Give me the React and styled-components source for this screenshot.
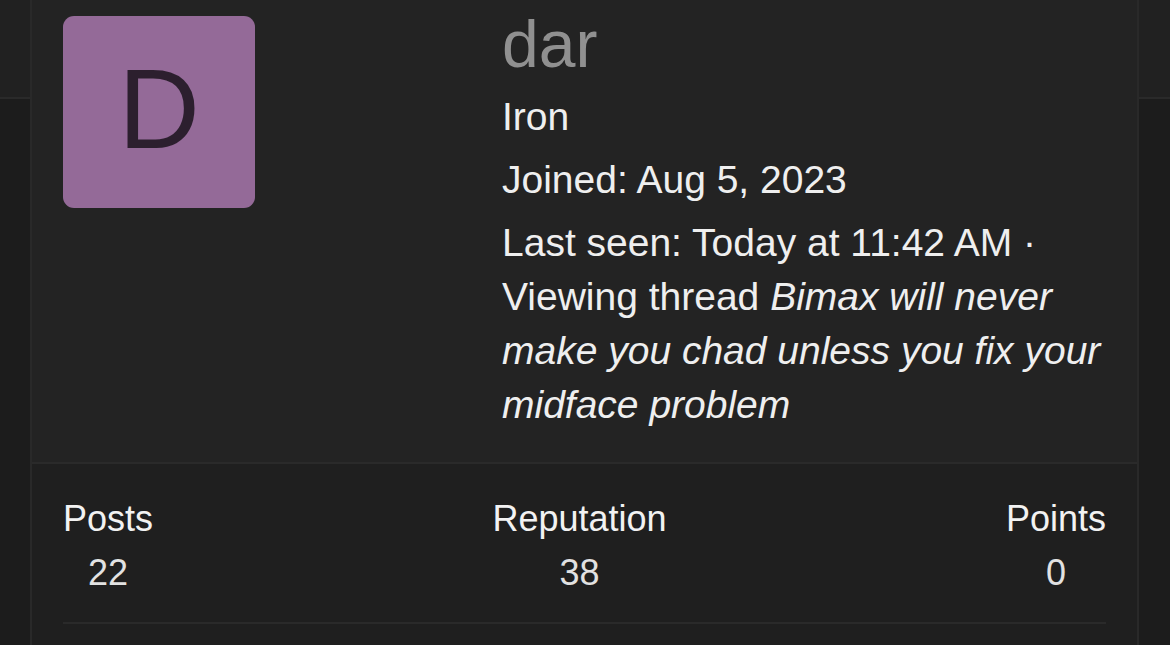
import React from 'react';
import styled, { createGlobalStyle } from 'styled-components';

const GlobalStyle = createGlobalStyle`
    html, body {
        margin: 0;
        padding: 0;
    }
    body {
        font-family: "Liberation Sans", Arial, Helvetica, sans-serif;
        color: #eeeeee;
        background: linear-gradient(
            to bottom,
            #212121 0,
            #212121 97px,
            #2a2a2a 97px,
            #2a2a2a 99px,
            #1c1c1c 99px
        );
        min-height: 100vh;
        overflow: hidden;
    }
`;

const stats = [
    { label: 'Posts', value: '22' },
    { label: 'Reputation', value: '38' },
    { label: 'Points', value: '0' },
];

const App = () => {
    return (
        <>
            <GlobalStyle />
            <Page>
                <Card>
                    <Profile>
                        <Avatar>D</Avatar>
                        <Info>
                            <Name>dar</Name>
                            <Line>Iron</Line>
                            <Line>Joined: Aug 5, 2023</Line>
                            <Line>
                                Last seen: Today at 11:42 AM · Viewing thread{' '}
                                <em>Bimax will never make you chad unless you fix your midface problem</em>
                            </Line>
                        </Info>
                    </Profile>
                    <Stats>
                        {stats.map((s) => (
                            <Stat key={s.label}>
                                <dt>{s.label}</dt>
                                <dd>{s.value}</dd>
                            </Stat>
                        ))}
                    </Stats>
                </Card>
            </Page>
        </>
    );
};

const Page = styled.div`
    padding: 0 31px 0 30px;
`;

const Card = styled.section`
    border: 2px solid #292929;
    border-top: none;
    background: #1f1f1f;
    min-height: 645px;
`;

const Profile = styled.div`
    display: grid;
    grid-template-columns: 439px 1fr;
    padding: 0 32px 30px 31px;
    background: #232323;
    border-bottom: 2px solid #2a2a2a;
`;

const Avatar = styled.div`
    width: 192px;
    height: 192px;
    margin-top: 16px;
    border-radius: 11px;
    background: #946a98;
    color: #2c1f2e;
    font-size: 113px;
    line-height: 1;
    display: flex;
    align-items: center;
    justify-content: center;
    padding-bottom: 6px;
    box-sizing: border-box;
`;

const Info = styled.div`
    padding-top: 11px;
`;

const Name = styled.h1`
    margin: 0 0 13px;
    font-size: 66px;
    font-weight: 400;
    line-height: 1;
    color: #909090;
`;

const Line = styled.p`
    margin: 0 0 9px;
    font-size: 39px;
    line-height: 54px;
    color: #efefef;
    &:last-child {
        margin-bottom: 0;
    }
    em {
        font-style: italic;
    }
`;

const Stats = styled.dl`
    display: flex;
    justify-content: space-between;
    margin: 0 31px;
    padding: 28px 0 22px;
    border-bottom: 2px solid #2a2a2a;
`;

const Stat = styled.div`
    text-align: center;
    font-size: 36px;
    line-height: 54px;
    dt {
        color: #f2f2f2;
    }
    dd {
        margin: 0;
        color: #e2e2e2;
    }
`;

export default App;
